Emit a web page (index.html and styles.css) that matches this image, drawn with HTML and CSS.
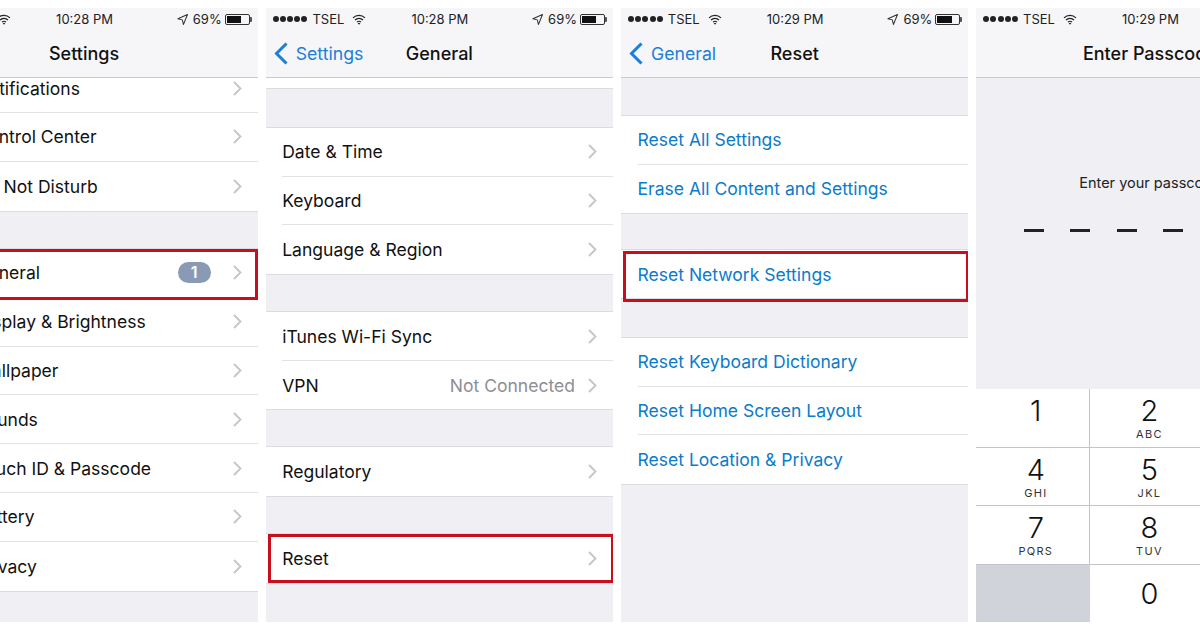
FILE: index.html
```html
<!DOCTYPE html>
<html lang="en">
<head>
    <meta charset="UTF-8">
    <title>Reset Network Settings</title>
    <link rel="stylesheet" href="styles.css">
</head>
<body>
    <svg class="defs" width="0" height="0">
        <symbol id="wifi" viewBox="0 0 14 11">
            <path d="M1 3.8a8.5 8.5 0 0 1 12 0M3 6a5.6 5.6 0 0 1 8 0M5 8.1a2.8 2.8 0 0 1 4 0" fill="none" stroke="#222" stroke-width="1.2"/>
            <path d="M7 10.8 5.7 9.3a2 2 0 0 1 2.6 0z" fill="#222"/>
        </symbol>
        <symbol id="arrow" viewBox="0 0 12 12">
            <path d="M11.5.5 1 5.2l4.8 1.2 1.2 5z" fill="none" stroke="#333" stroke-width="1.1" stroke-linejoin="round"/>
        </symbol>
        <symbol id="chevron" viewBox="0 0 9 15">
            <path d="M1 1l6.5 6.5L1 14" fill="none" stroke="#c4c4c9" stroke-width="1.8"/>
        </symbol>
        <symbol id="back" viewBox="0 0 14 23">
            <path d="M12.5 1.5 2.5 11.5l10 10" fill="none" stroke="#1a7fd8" stroke-width="3"/>
        </symbol>
    </svg>

    <div class="strip">
        <!-- Settings -->
        <section class="screen first">
            <div class="status">
                <div class="status-left"><svg class="wifi"><use href="#wifi"/></svg></div>
                <div class="time">10:28 PM</div>
                <div class="status-right"><svg class="arrow"><use href="#arrow"/></svg><span>69%</span><div class="battery"><div class="charge"></div></div></div>
            </div>
            <div class="nav"><div></div><div class="title">Settings</div><div></div></div>
            <div class="group">
                <div class="row cut"><div class="row-body"><span class="label">Notifications</span><svg class="chev"><use href="#chevron"/></svg></div></div>
                <div class="row"><div class="row-body"><span class="label">Control Center</span><svg class="chev"><use href="#chevron"/></svg></div></div>
                <div class="row"><div class="row-body"><span class="label">Do Not Disturb</span><svg class="chev"><use href="#chevron"/></svg></div></div>
            </div>
            <div class="group gap">
                <div class="row marked"><div class="row-body"><span class="label">General</span><span class="badge">1</span><svg class="chev"><use href="#chevron"/></svg></div></div>
                <div class="row"><div class="row-body"><span class="label">Display &amp; Brightness</span><svg class="chev"><use href="#chevron"/></svg></div></div>
                <div class="row"><div class="row-body"><span class="label">Wallpaper</span><svg class="chev"><use href="#chevron"/></svg></div></div>
                <div class="row"><div class="row-body"><span class="label">Sounds</span><svg class="chev"><use href="#chevron"/></svg></div></div>
                <div class="row"><div class="row-body"><span class="label">Touch ID &amp; Passcode</span><svg class="chev"><use href="#chevron"/></svg></div></div>
                <div class="row"><div class="row-body"><span class="label">Battery</span><svg class="chev"><use href="#chevron"/></svg></div></div>
                <div class="row"><div class="row-body"><span class="label">Privacy</span><svg class="chev"><use href="#chevron"/></svg></div></div>
            </div>
        </section>

        <!-- General -->
        <section class="screen">
            <div class="status">
                <div class="status-left"><span class="dots"><i></i><i></i><i></i><i></i><i></i></span><span>TSEL</span><svg class="wifi"><use href="#wifi"/></svg></div>
                <div class="time">10:28 PM</div>
                <div class="status-right"><svg class="arrow"><use href="#arrow"/></svg><span>69%</span><div class="battery"><div class="charge"></div></div></div>
            </div>
            <div class="nav">
                <div class="back"><svg class="back-icon"><use href="#back"/></svg><span>Settings</span></div>
                <div class="title">General</div>
                <div></div>
            </div>
            <div class="top-strip"></div>
            <div class="group gap gap-wide">
                <div class="row"><div class="row-body"><span class="label">Date &amp; Time</span><svg class="chev"><use href="#chevron"/></svg></div></div>
                <div class="row"><div class="row-body"><span class="label">Keyboard</span><svg class="chev"><use href="#chevron"/></svg></div></div>
                <div class="row"><div class="row-body"><span class="label">Language &amp; Region</span><svg class="chev"><use href="#chevron"/></svg></div></div>
            </div>
            <div class="group gap">
                <div class="row"><div class="row-body"><span class="label">iTunes Wi-Fi Sync</span><svg class="chev"><use href="#chevron"/></svg></div></div>
                <div class="row"><div class="row-body"><span class="label">VPN</span><span class="value">Not Connected</span><svg class="chev"><use href="#chevron"/></svg></div></div>
            </div>
            <div class="group gap gap-tight">
                <div class="row"><div class="row-body"><span class="label">Regulatory</span><svg class="chev"><use href="#chevron"/></svg></div></div>
            </div>
            <div class="group gap gap-tight">
                <div class="row marked inset"><div class="row-body"><span class="label">Reset</span><svg class="chev"><use href="#chevron"/></svg></div></div>
            </div>
        </section>

        <!-- Reset -->
        <section class="screen">
            <div class="status">
                <div class="status-left"><span class="dots"><i></i><i></i><i></i><i></i><i></i></span><span>TSEL</span><svg class="wifi"><use href="#wifi"/></svg></div>
                <div class="time">10:29 PM</div>
                <div class="status-right"><svg class="arrow"><use href="#arrow"/></svg><span>69%</span><div class="battery"><div class="charge"></div></div></div>
            </div>
            <div class="nav">
                <div class="back"><svg class="back-icon"><use href="#back"/></svg><span>General</span></div>
                <div class="title">Reset</div>
                <div></div>
            </div>
            <div class="group gap gap-first">
                <div class="row"><div class="row-body link">Reset All Settings</div></div>
                <div class="row"><div class="row-body link">Erase All Content and Settings</div></div>
            </div>
            <div class="group gap gap-narrow">
                <div class="row marked inset tall"><div class="row-body link">Reset Network Settings</div></div>
            </div>
            <div class="group gap gap-wide">
                <div class="row"><div class="row-body link">Reset Keyboard Dictionary</div></div>
                <div class="row"><div class="row-body link">Reset Home Screen Layout</div></div>
                <div class="row"><div class="row-body link">Reset Location &amp; Privacy</div></div>
            </div>
        </section>

        <!-- Passcode -->
        <section class="screen passcode">
            <div class="status">
                <div class="status-left"><span class="dots"><i></i><i></i><i></i><i></i><i></i></span><span>TSEL</span><svg class="wifi"><use href="#wifi"/></svg></div>
                <div class="time">10:29 PM</div>
                <div class="status-right"><svg class="arrow"><use href="#arrow"/></svg><span>69%</span><div class="battery"><div class="charge"></div></div></div>
            </div>
            <div class="nav"><div></div><div class="title">Enter Passcode</div><div></div></div>
            <div class="prompt">
                <p>Enter your passcode</p>
                <div class="dashes"><i></i><i></i><i></i><i></i><i></i><i></i></div>
            </div>
            <div class="keypad">
                <div class="key"><b>1</b></div>
                <div class="key"><b>2</b><small>ABC</small></div>
                <div class="key"><b>3</b><small>DEF</small></div>
                <div class="key"><b>4</b><small>GHI</small></div>
                <div class="key"><b>5</b><small>JKL</small></div>
                <div class="key"><b>6</b><small>MNO</small></div>
                <div class="key"><b>7</b><small>PQRS</small></div>
                <div class="key"><b>8</b><small>TUV</small></div>
                <div class="key"><b>9</b><small>WXYZ</small></div>
                <div class="key blank"></div>
                <div class="key zero"><b>0</b></div>
                <div class="key blank"></div>
            </div>
        </section>
    </div>
</body>
</html>
```

FILE: styles.css
```css
* {
    margin: 0;
    padding: 0;
    box-sizing: border-box;
}

body {
    background: white;
    width: 1200px;
    height: 630px;
    overflow: hidden;
    font-family: 'Inter', 'Liberation Sans', sans-serif;
    color: #111;
}

.defs {
    display: block;
    height: 0;
}

.strip {
    display: flex;
    gap: 8px;
    margin-top: 8px;
    margin-left: -89.6px;
    width: 1500px;
}

.screen {
    width: 347.3px;
    height: 614px;
    flex: none;
    background: #efeff4;
    overflow: hidden;
}

.status {
    display: grid;
    grid-template-columns: 1fr auto 1fr;
    align-items: center;
    height: 26px;
    padding: 0 6px 4px 7px;
    background: #f6f6f9;
    font-size: 13px;
    color: #222;
}

.status-left,
.status-right {
    display: flex;
    align-items: center;
}

.status-right {
    justify-content: flex-end;
}

.dots {
    display: flex;
    gap: 1.2px;
    margin-right: 5px;
}

.dots i {
    width: 6px;
    height: 6px;
    border-radius: 50%;
    background: #222;
}

.wifi {
    width: 14px;
    height: 11px;
    margin-left: 8px;
}

.first .wifi {
    margin-left: 80px;
}

.arrow {
    width: 11px;
    height: 11px;
    margin-right: 5px;
}

.battery {
    position: relative;
    width: 25px;
    height: 11px;
    margin: 0 2px 0 3px;
    border: 1px solid #333;
    border-radius: 2px;
    padding: 1px;
}

.battery::after {
    content: "";
    position: absolute;
    right: -3px;
    top: 2px;
    width: 2px;
    height: 5px;
    background: #555;
    border-radius: 0 1px 1px 0;
}

.charge {
    width: 68%;
    height: 100%;
    background: #111;
}

.nav {
    display: grid;
    grid-template-columns: 1fr auto 1fr;
    align-items: center;
    height: 44px;
    padding: 0 8px 4px;
    background: #f6f6f9;
    border-bottom: 1px solid #c9c9ce;
}

.title {
    font-size: 18px;
    font-weight: 500;
    white-space: nowrap;
}

.back {
    display: flex;
    align-items: center;
    gap: 8px;
    font-size: 17.7px;
    color: #1a7fd8;
}

.back-icon {
    width: 14px;
    height: 23px;
}

.top-strip {
    height: 11px;
    background: white;
    border-bottom: 1px solid #dcdce0;
}

.group {
    background: white;
    border-bottom: 1px solid #dcdce0;
}

.gap {
    margin-top: 36.5px;
    border-top: 1px solid #dcdce0;
}

.gap-first {
    margin-top: 37px;
}

.gap-wide {
    margin-top: 38px;
}

.gap-narrow {
    margin-top: 35px;
}

.gap-tight {
    margin-top: 36px;
}

.row {
    position: relative;
    padding-left: 16.5px;
    background: white;
}

.first .row {
    padding-left: 65px;
}

.row-body {
    display: flex;
    align-items: center;
    height: 48.6px;
    padding-right: 16px;
    border-bottom: 1px solid #e2e2e5;
    font-size: 17.55px;
}

.first .row-body {
    height: 48.8px;
}

.row:last-child .row-body {
    border-bottom: none;
}

.first .cut .row-body {
    height: 35px;
    padding-bottom: 14px;
}

.label {
    flex: 1;
    white-space: nowrap;
}

.value {
    color: #8e8e93;
    margin-right: 13px;
}

.link {
    color: #0b7bcb;
}

.tall .row-body {
    height: 48px;
}

.chev {
    width: 9px;
    height: 15px;
    flex: none;
}

.badge {
    width: 33px;
    height: 21px;
    margin-right: 22px;
    border-radius: 11px;
    background: #8a9ab4;
    color: white;
    font-size: 16px;
    font-weight: 600;
    line-height: 21px;
    text-align: center;
}

.marked {
    z-index: 1;
}

/* red highlight box drawn over the row */
.marked::after {
    content: "";
    position: absolute;
    top: 0;
    bottom: -2px;
    left: 0;
    right: 0;
    border: 3px solid #c70f1e;
}

.inset::after {
    bottom: 0;
    left: 2px;
    right: -1px;
}

.tall::after {
    top: 1px;
    bottom: -4px;
}

.prompt {
    height: 311px;
    padding-top: 96px;
    text-align: center;
}

.prompt p {
    font-size: 14.5px;
    color: #222;
}

.dashes {
    display: flex;
    justify-content: center;
    gap: 26.4px;
    margin-top: 38px;
}

.dashes i {
    width: 20px;
    height: 3px;
    flex: none;
    background: #222;
}

.keypad {
    display: grid;
    grid-template-columns: 114px 1fr 114px;
    grid-auto-rows: 58.5px;
    background: white;
}

.key {
    display: flex;
    flex-direction: column;
    align-items: center;
    padding-top: 6px;
    background: white;
    border-right: 1px solid #c4c4c8;
    border-bottom: 1px solid #c4c4c8;
}

.key:nth-child(3n+1) {
    padding-left: 6px;
}

.key b {
    font-size: 29px;
    font-weight: 300;
    line-height: 32px;
}

.key small {
    font-size: 11px;
    letter-spacing: 1.3px;
    line-height: 14px;
    color: #333;
}

.zero {
    padding-top: 13px;
    border-bottom: none;
}

.blank {
    background: #d0d3da;
    border: none;
}
```
